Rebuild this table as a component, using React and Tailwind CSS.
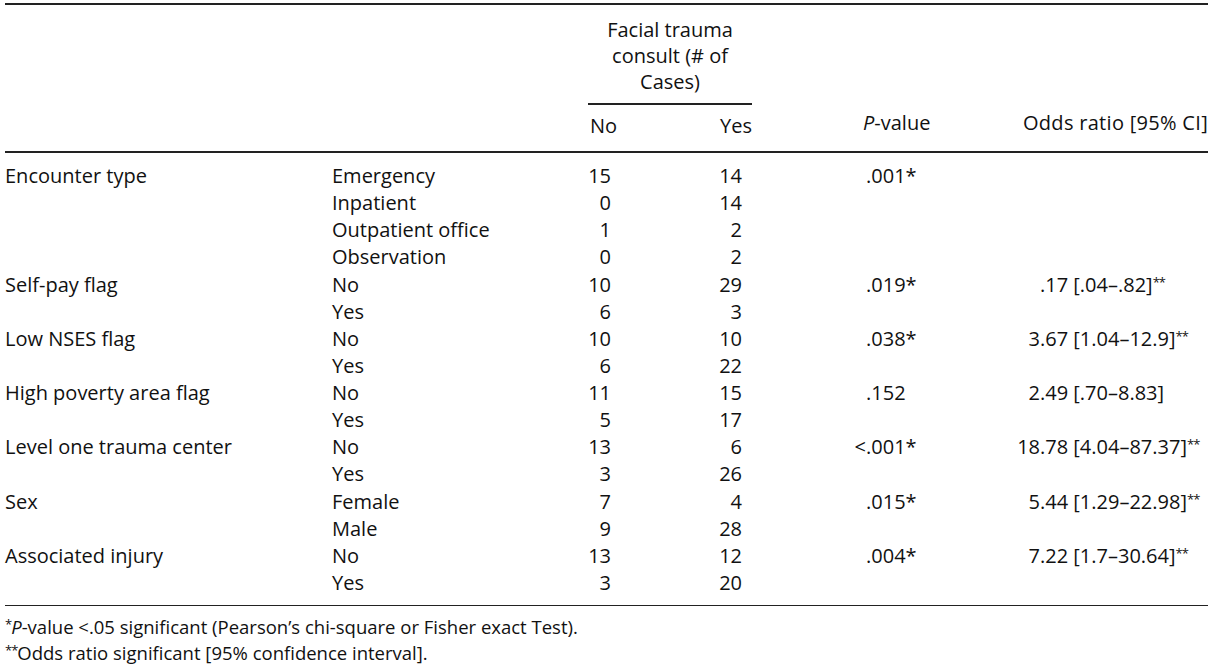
import React from 'react';

const groups = [
  {
    label: 'Encounter type',
    p: ['', '.001*'],
    items: [
      ['Emergency', '15', '14'],
      ['Inpatient', '0', '14'],
      ['Outpatient office', '1', '2'],
      ['Observation', '0', '2'],
    ],
  },
  { label: 'Self-pay flag', p: ['', '.019*'], or: ['', '.17 [.04–.82]', true], items: [['No', '10', '29'], ['Yes', '6', '3']] },
  { label: 'Low NSES flag', p: ['', '.038*'], or: ['3', '.67 [1.04–12.9]', true], items: [['No', '10', '10'], ['Yes', '6', '22']] },
  { label: 'High poverty area flag', p: ['', '.152'], or: ['2', '.49 [.70–8.83]', false], items: [['No', '11', '15'], ['Yes', '5', '17']] },
  { label: 'Level one trauma center', p: ['<', '.001*'], or: ['18', '.78 [4.04–87.37]', true], items: [['No', '13', '6'], ['Yes', '3', '26']] },
  { label: 'Sex', p: ['', '.015*'], or: ['5', '.44 [1.29–22.98]', true], items: [['Female', '7', '4'], ['Male', '9', '28']] },
  { label: 'Associated injury', p: ['', '.004*'], or: ['7', '.22 [1.7–30.64]', true], items: [['No', '13', '12'], ['Yes', '3', '20']] },
];

const Sup = ({ children }) => (
  <span className="relative -top-[5px] text-[13px] tracking-[-1px]">{children}</span>
);

function Row({ label, item, p, or }) {
  return (
    <div className="flex h-[27.13px] items-center">
      <div className="w-[327px]">{label}</div>
      <div className="w-[256px]">{item[0]}</div>
      <div className="w-[82px] pr-[59px] text-right">{item[1]}</div>
      <div className="w-[82px] pr-[10px] text-right">{item[2]}</div>
      <div className="flex w-[208px]">
        {p && (
          <>
            <span className="w-[114px] text-right">{p[0]}</span>
            <span>{p[1]}</span>
          </>
        )}
      </div>
      <div className="flex w-[248px] whitespace-nowrap">
        {or && (
          <>
            <span className="w-[80px] text-right">{or[0]}</span>
            <span>
              {or[1]}
              {or[2] && <Sup>**</Sup>}
            </span>
          </>
        )}
      </div>
    </div>
  );
}

export default function App() {
  return (
    <div className="min-h-[669px] bg-white text-[#111] [font-family:'Open_Sans',sans-serif] text-[20px]">
      <div className="w-[1208px] pl-[5px] pt-[3px]">
        <div className="h-[2px] bg-[#222]" />

        {/* header */}
        <div className="flex">
          <div className="w-[583px]" />
          <div className="w-[164px]">
            <div className="pt-[12px] text-center leading-[26px]">
              Facial trauma
              <br />
              consult (# of
              <br />
              Cases)
            </div>
            <div className="mt-[8px] h-[1.5px] bg-[#222]" />
            <div className="flex h-[46px] items-center justify-between pl-[2px] pb-[3px]">
              <span>No</span>
              <span>Yes</span>
            </div>
          </div>
          <div className="flex w-[208px] items-end pb-[13px]">
            <span className="pl-[111px]">
              <i>P</i>-value
            </span>
          </div>
          <div className="flex w-[248px] items-end justify-end pb-[13px] tracking-[0.3px]">Odds ratio [95% CI]</div>
        </div>

        <div className="h-[2px] bg-[#222]" />

        <div className="pt-[10px] pb-[8px]">
          {groups.map((g) =>
            g.items.map((item, i) => (
              <Row
                key={g.label + i}
                label={i === 0 ? g.label : ''}
                item={item}
                p={i === 0 ? g.p : null}
                or={i === 0 ? g.or : null}
              />
            ))
          )}
        </div>

        <div className="h-[1.5px] bg-[#222]" />

        <div className="pt-[9px] text-[18.5px] leading-[24px]">
          <p>
            <Sup>*</Sup>
            <i>P</i>-value &lt;.05 significant (Pearson’s chi-square or Fisher exact Test).
          </p>
          <p>
            <Sup>**</Sup>Odds ratio significant [95% confidence interval].
          </p>
        </div>
      </div>
    </div>
  );
}
